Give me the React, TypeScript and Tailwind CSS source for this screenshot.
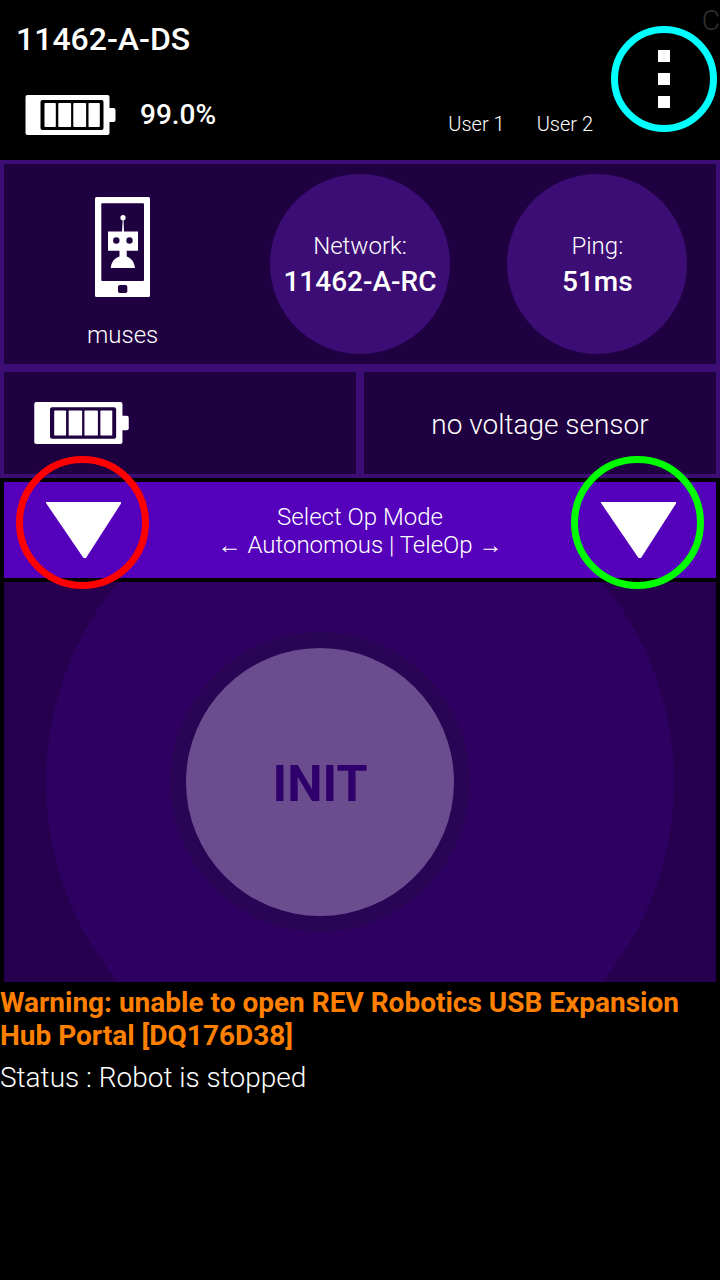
import React from "react";

function Battery({ className, hole }: { className: string; hole: string }) {
  return (
    <svg viewBox="0 0 90 40" className={className} aria-hidden="true">
      <rect x="0" y="0" width="84" height="40" rx="2" fill="#fff" />
      <rect x="80" y="13" width="10" height="14" rx="2" fill="#fff" />
      <rect x="15" y="5" width="63" height="30" rx="2" fill={hole} />
      <rect x="19" y="8" width="11.3" height="24" rx="0.8" fill="#fff" />
      <rect x="32.8" y="8" width="12.8" height="24" rx="0.8" fill="#fff" />
      <rect x="47.8" y="8" width="12.8" height="24" rx="0.8" fill="#fff" />
      <rect x="63" y="8" width="11.3" height="24" rx="0.8" fill="#fff" />
    </svg>
  );
}

function RobotPhone() {
  return (
    <svg viewBox="0 0 55 100" className="h-[100px] w-[55px]" aria-hidden="true">
      <rect width="55" height="100" rx="1.5" fill="#fff" />
      <rect x="6.3" y="6.3" width="42.7" height="77.7" rx="1" fill="#1f0040" />
      <rect x="23" y="88" width="9.3" height="8" rx="1.8" fill="#1f0040" />
      <g fill="#fff">
        <circle cx="28" cy="20.7" r="2.6" />
        <path d="M27.7 22h0.8l0.5 13h-2z" />
        <path d="M13 34.5h30v19.3H31.7v5.6C36.5 61 39.7 65.5 39.9 71H15.8C16 65.5 19.2 61 24.5 59.4V53.8H13z" />
      </g>
      <circle cx="21.3" cy="43.5" r="3.2" fill="#1f0040" />
      <circle cx="34.5" cy="43.5" r="3.2" fill="#1f0040" />
    </svg>
  );
}

function Stat({ label, value }: { label: string; value: string }) {
  return (
    <div className="flex size-[180px] flex-col items-center justify-center justify-self-center rounded-full bg-[#3b0d75]">
      <span className="text-2xl leading-9 font-light">{label}</span>
      <span className="text-[28px] leading-9 font-medium">{value}</span>
    </div>
  );
}

function ModeButton({ label, ring }: { label: string; ring: string }) {
  return (
    <button type="button" aria-label={label} className="relative z-10 flex h-24 w-[133px] shrink-0 justify-center pt-5 pl-px">
      <svg viewBox="0 0 75 56" className="h-14 w-[75px]" aria-hidden="true">
        <path d="M0 0H75V1.5L40 56H37.5L0 1z" fill="#fff" />
      </svg>
      <span className={`absolute -top-[26px] left-0 size-[133px] rounded-full border-[7px] ${ring}`} />
    </button>
  );
}

export default function App() {
  return (
    <main className="min-h-screen overflow-x-hidden bg-black font-['Roboto','Liberation_Sans',sans-serif] text-white">
      <header className="relative flex h-40 justify-between overflow-hidden">
        <div className="flex flex-col gap-[38px] pt-[21px] pl-4">
          <h1 className="text-[32px] leading-9 font-medium">11462-A-DS</h1>
          <div className="flex items-center gap-6 pl-[9px]">
            <Battery className="h-10 w-[91px]" hole="#000" />
            <span className="text-[28px] leading-9 font-medium">99.0%</span>
          </div>
        </div>
        <div className="flex items-end pr-[3px]">
          <div className="flex gap-8 pr-[18px] pb-6 text-xl leading-6 font-light">
            <span>User 1</span>
            <span>User 2</span>
          </div>
          <button
            type="button"
            aria-label="Menu"
            className="mb-7 flex size-[106px] flex-col items-center justify-center gap-[11px] rounded-full border-[7px] border-[#00ffff]"
          >
            <span className="size-3 bg-white" />
            <span className="size-3 bg-white" />
            <span className="size-3 bg-white" />
          </button>
        </div>
        <span className="absolute top-[5px] right-0 text-[28px] leading-8 font-light text-[#333333]">C</span>
      </header>

      <section className="flex flex-col gap-2 bg-[#3b0d75] p-1">
        <div className="grid grid-cols-3 items-center bg-[#1f0040] py-[10px]">
          <div className="flex h-[180px] flex-col items-center gap-5 pt-[23px]">
            <RobotPhone />
            <span className="text-2xl leading-9 font-light">muses</span>
          </div>
          <Stat label="Network:" value="11462-A-RC" />
          <Stat label="Ping:" value="51ms" />
        </div>
        <div className="grid grid-cols-2 gap-2">
          <div className="flex h-[102px] items-center bg-[#1f0040] pl-[30px]">
            <Battery className="h-[42px] w-[95px]" hole="#1f0040" />
          </div>
          <div className="flex h-[102px] items-center justify-center bg-[#1f0040] pt-1 text-[28px] font-light">
            no voltage sensor
          </div>
        </div>
      </section>

      <section className="mx-1 mt-1 flex h-24 items-center justify-between bg-[#5500bb] px-3">
        <ModeButton label="Autonomous" ring="border-[#ff0000]" />
        <p className="pt-0.5 text-center text-2xl leading-7 font-light">
          Select Op Mode
          <br />← Autonomous | TeleOp →
        </p>
        <ModeButton label="TeleOp" ring="border-[#00ff00]" />
      </section>

      <section className="relative mx-1 mt-1 flex h-[400px] items-center justify-center overflow-hidden bg-[#26004f]">
        <div className="absolute top-1/2 left-1/2 size-[628px] -translate-1/2 rounded-full bg-[#2d0061]" />
        <div className="relative mr-20 rounded-full bg-[#2a0556] p-4">
          <button
            type="button"
            className="size-[268px] rounded-full bg-[#6b4d8f] pt-1 text-[50px] font-bold text-[#2f006b]"
          >
            INIT
          </button>
        </div>
      </section>

      <section className="flex flex-col gap-[9px] pt-1 text-[28px] leading-[33px]">
        <p className="font-bold text-[#ff8000]">
          Warning: unable to open REV Robotics USB Expansion Hub Portal [DQ176D38]
        </p>
        <p className="font-light">Status : Robot is stopped</p>
      </section>
    </main>
  );
}
